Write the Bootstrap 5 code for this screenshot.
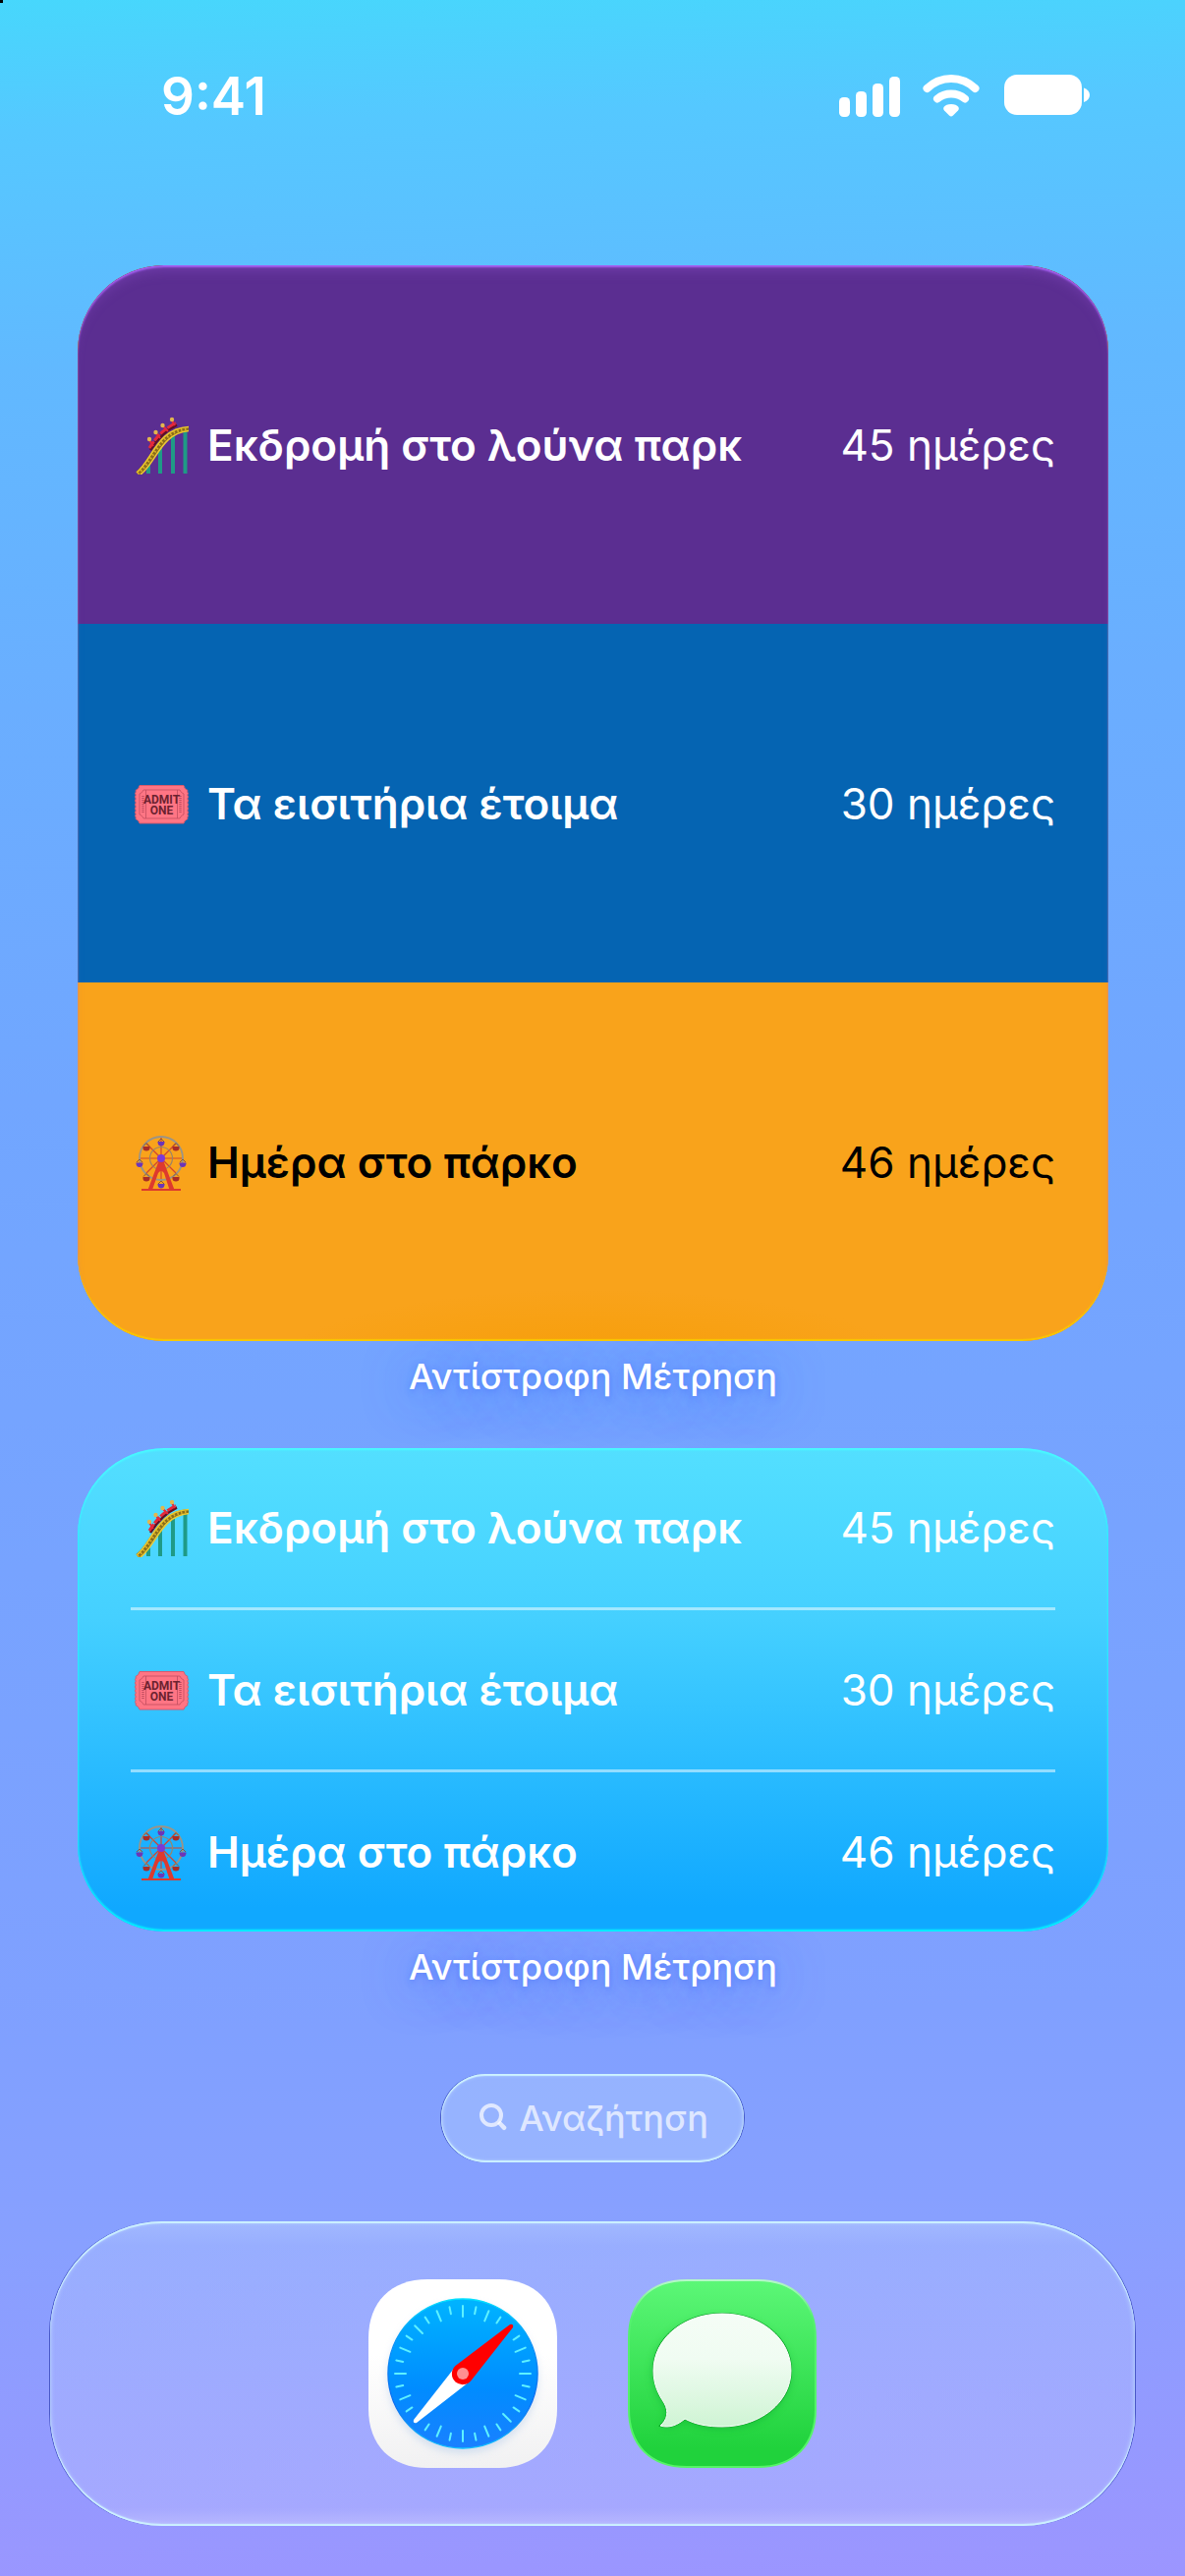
<!DOCTYPE html>
<html lang="el">
  <head>
    <meta charset="UTF-8" />
    <meta name="viewport" content="width=device-width, initial-scale=1.0" />
    <title>Αντίστροφη Μέτρηση</title>
    <link
      href="https://cdn.jsdelivr.net/npm/bootstrap@5.3.0/dist/css/bootstrap.min.css"
      rel="stylesheet"
    />
    <style>
      body {
        min-height: 100vh;
        font-family: "Inter", "Liberation Sans", sans-serif;
        color: #ffffff;
        background: linear-gradient(
          178deg,
          #47d7fc 0%,
          #55c8ff 5%,
          #61b9ff 14%,
          #6aaeff 27%,
          #71a6ff 42%,
          #77a3ff 60%,
          #80a0ff 78%,
          #88a0ff 86%,
          #9c95ff 100%
        );
      }

      body::before {
        content: "";
        position: absolute;
        top: 0;
        left: 0;
        width: 3px;
        height: 3px;
        background: #000000;
      }

      /* Status bar */
      .status-bar {
        height: 196px;
        padding: 0 96px 0 164px;
      }

      .status-time {
        font-size: 53px;
        font-weight: 600;
        line-height: 1;
      }

      /* Widgets */
      .home {
        padding: 74px 78px 0 79px;
      }

      .widget {
        border-radius: 88px;
        overflow: hidden;
      }

      .widget-tall {
        background: #f9a31b;
      }

      .event {
        padding: 0 54px;
        font-size: 44px;
        line-height: 60px;
        gap: 18px;
      }

      .event svg {
        width: 60px;
        height: 60px;
      }

      .event-tall {
        height: 365px;
      }

      .bg-purple {
        background: #5b2e91;
      }

      .bg-ocean {
        background: #0564b2;
      }

      .bg-amber {
        background: radial-gradient(
            ellipse 340px 90px at 50% 110%,
            rgba(245, 155, 0, 0.8),
            rgba(249, 163, 27, 0)
          ),
          #f9a31b;
        color: #000000;
      }

      .rim-tall,
      .rim-wide {
        position: absolute;
        inset: 0;
        border-radius: 88px;
      }

      .rim-tall {
        box-shadow: inset 0 -2px 1px #f8c800, inset 0 2px 2px #a860f5,
          inset 0 12px 14px -8px rgba(150, 90, 220, 0.4);
      }

      .rim-wide {
        box-shadow: inset 0 -2px 2px #00f5ff, inset 0 2px 2px #48fbff,
          inset 0 0 3px #3cf0ff;
      }

      .widget-wide {
        background: linear-gradient(#53dfff, #45d0ff 35%, #10a8ff 95%);
      }

      .event-wide {
        height: 162px;
      }

      .event-line {
        height: 3px;
        margin: 0 54px;
        background: rgba(255, 255, 255, 0.5);
      }

      .caption {
        font-size: 36px;
        font-weight: 500;
        line-height: 48px;
        padding: 12px 0 49px;
        text-shadow: 0 2px 6px rgba(50, 90, 240, 0.35),
          0 6px 50px rgba(50, 110, 255, 0.7);
      }

      /* Search pill and dock */
      .search-area {
        padding-top: 36px;
      }

      .btn-search {
        height: 90px;
        padding: 0 36px;
        gap: 11px;
        border: 0;
        border-radius: 45px;
        font-size: 36px;
        font-weight: 500;
        line-height: 48px;
        color: rgba(255, 255, 255, 0.7);
        background: rgba(165, 195, 255, 0.55);
      }

      .btn-search svg {
        width: 32px;
        height: 32px;
      }

      .glass-rim {
        box-shadow: inset 0 2px 1px #cdf2ff, inset 0 -2px 1px #cdf2ff,
          inset 0 0 4px 1px rgba(190, 215, 255, 0.8),
          1px 0 0 rgba(50, 65, 180, 0.75), -1px 0 0 rgba(50, 65, 180, 0.75);
      }

      .dock {
        height: 310px;
        margin: 60px 51px 51px;
        gap: 72px;
        border-radius: 114px;
        background: linear-gradient(
          rgba(200, 222, 255, 0.4),
          rgba(175, 195, 255, 0.4) 8%,
          rgba(185, 190, 255, 0.42) 94%,
          rgba(215, 215, 255, 0.5)
        );
      }

      .dock svg {
        display: block;
        width: 192px;
        height: 192px;
      }
    </style>
  </head>
  <body>
    <!-- Shared drawings -->
    <svg width="0" height="0" class="position-absolute" aria-hidden="true">
      <defs>
        <symbol id="coaster" viewBox="0 0 60 60">
          <g stroke="#1f9a86" stroke-width="4">
            <path d="M18 46V59M30 32V59M43 21V59M55.500 16V59" />
          </g>
          <path
            d="M7 59C24 46 28 15 59 13.500"
            fill="none"
            stroke="#8a6d18"
            stroke-width="5"
          />
          <path
            d="M6 58C22 45 27 13 59 11.500M10 60C26 48 31 18 59 15.500"
            fill="none"
            stroke="#ecc92f"
            stroke-width="1.600"
          />
          <path
            d="M7 59C24 46 28 15 59 13.500"
            fill="none"
            stroke="#d9b029"
            stroke-width="3"
            stroke-dasharray="1.500 2.500"
          />
          <path d="M20 35C27 24 35 15 47 9.500" fill="none" stroke="#5e1022" stroke-width="2.500" />
          <path
            d="M19 33C26 22 33 14 46 7.500"
            fill="none"
            stroke="#e5283a"
            stroke-width="3"
            stroke-dasharray="8 1.200"
          />
          <g stroke="#e5283a" stroke-width="2">
            <path d="M19 25L23 31M26 18L30 23M33 11L38 16M42 5L45 10" />
          </g>
          <g fill="#e2b64e">
            <circle cx="19" cy="24" r="2.200" />
            <circle cx="25.500" cy="17" r="2.200" />
            <circle cx="32.500" cy="10" r="2.200" />
            <circle cx="42" cy="4" r="2.200" />
          </g>
        </symbol>

        <symbol id="ticket" viewBox="0 0 60 60">
          <path
            d="M9 11.500H54Q54.500 15 58 16.500Q57 18 58.500 19.500Q57 21 58.500 23Q57 25 58.500 27Q57 29 58.500 31Q57 33 58.500 35Q57 37 58.500 39Q57 41 58.500 42.500Q57 44 58 45.500Q54.500 47 54 50H9Q8.500 47 5 45.500Q6 44 4.500 42.500Q6 41 4.500 39Q6 37 4.500 35Q6 33 4.500 31Q6 29 4.500 27Q6 25 4.500 23Q6 21 4.500 19.500Q6 18 5 16.500Q8.500 15 9 11.500Z"
            fill="#ff7584"
            stroke="#d9596c"
          />
          <path
            d="M13 16H50Q51 19 54 20V41Q51 42 50 45H13Q12 42 9 41V20Q12 19 13 16ZM15.500 16V45M47.500 16V45"
            fill="none"
            stroke="#c24e60"
            stroke-width=".8"
          />
          <path
            d="M12.500 22V39M50.500 22V39"
            stroke="#c24e60"
            stroke-width="2.500"
            stroke-dasharray="1 1"
          />
          <g
            fill="#6b2230"
            font-family="'Liberation Sans Narrow', Roboto, sans-serif"
            font-size="12"
            font-weight="700"
            text-anchor="middle"
          >
            <text x="31.500" y="29.500">ADMIT</text>
            <text x="31.500" y="40.500">ONE</text>
          </g>
        </symbol>

        <symbol id="ferris" viewBox="0 0 60 60">
          <path
            d="M31 4V48M9 26H53M15.500 10.500L46.500 41.500M46.500 10.500L15.500 41.500"
            stroke="#d1462f"
            stroke-width="1.200"
          />
          <circle cx="31" cy="26" r="11.500" fill="none" stroke="#9a8468" stroke-width="1.200" />
          <circle cx="31" cy="26" r="22" fill="none" stroke="#9b9487" stroke-width="1.900" />
          <path
            fill="#6b35b8"
            d="M27.500 9H34.500V10Q34 13.500 31 13.500Q28 13.500 27.500 10ZM5.500 30.500H12.500V31.500Q12 35 9 35Q6 35 5.500 31.500ZM49.500 30.500H56.500V31.500Q56 35 53 35Q50 35 49.500 31.500ZM27.500 52H34.500V53Q34 56.500 31 56.500Q28 56.500 27.500 53Z"
          />
          <path
            fill="#a92c26"
            d="M12.500 14H19.500V16Q19 18.500 16 18.500Q13 18.500 12.500 16ZM42.500 14H49.500V16Q49 18.500 46 18.500Q43 18.500 42.500 16ZM12.500 45H19.500V47Q19 49.500 16 49.500Q13 49.500 12.500 47ZM42.500 45H49.500V47Q49 49.500 46 49.500Q43 49.500 42.500 47Z"
          />
          <path
            fill="none"
            stroke="#8a5a3a"
            d="M13 13.500L16 10.500L19 13.500M43 13.500L46 10.500L49 13.500M13 44.500L16 41.500L19 44.500M43 44.500L46 41.500L49 44.500M28 9L31 6L34 9M6 30L9 27L12 30M50 30L53 27L56 30M28 52L31 49L34 52"
          />
          <path
            d="M28.500 29H33.500L44.500 58H39.500L34 41Q31 37 28 41L22 58H17.500Z"
            fill="#dd3a2e"
          />
          <path d="M11 58H51" stroke="#dd3a2e" stroke-width="2.200" />
          <circle cx="31" cy="26" r="4" fill="#7a3ad6" />
        </symbol>
      </defs>
    </svg>

    <header class="status-bar d-flex align-items-center justify-content-between">
      <time class="status-time">9:41</time>
      <svg width="256" height="44" viewBox="0 0 256 44" fill="#fff" role="img" aria-label="Σήμα, Wi-Fi, μπαταρία">
        <rect x="0" y="23" width="11" height="20" rx="4.500" />
        <rect x="17" y="17" width="11" height="26" rx="4.500" />
        <rect x="34" y="9" width="11" height="34" rx="4.500" />
        <rect x="51" y="2" width="11" height="41" rx="4.500" />
        <g fill="none" stroke="#fff" stroke-width="8" stroke-linecap="round">
          <path d="M89.500 14Q100 4 114 4T138.500 14" />
          <path d="M100 24.500Q106 19.500 114 19.500T128 24.500" />
        </g>
        <path d="M114 30C110.500 30 108 31 106.500 33Q105.500 35 107 36.500L112 41.500Q114 43.500 116 41.500L121 36.500Q122.500 35 121.500 33C120 31 117.500 30 114 30Z" />
        <rect x="168" y="0" width="79" height="41" rx="13" />
        <path d="M249 13.500C257 16 257 25.500 249 28Z" />
      </svg>
    </header>

    <main class="home">
      <section class="text-center">
        <div class="widget widget-tall position-relative text-start">
          <ul class="list-unstyled mb-0">
            <li class="event event-tall bg-purple d-flex align-items-center">
              <svg aria-hidden="true"><use href="#coaster" /></svg>
              <span class="fw-semibold me-auto">Εκδρομή στο λούνα παρκ</span>
              <span>45 ημέρες</span>
            </li>
            <li class="event event-tall bg-ocean d-flex align-items-center">
              <svg aria-hidden="true"><use href="#ticket" /></svg>
              <span class="fw-semibold me-auto">Τα εισιτήρια έτοιμα</span>
              <span>30 ημέρες</span>
            </li>
            <li class="event event-tall bg-amber d-flex align-items-center">
              <svg aria-hidden="true"><use href="#ferris" /></svg>
              <span class="fw-semibold me-auto">Ημέρα στο πάρκο</span>
              <span>46 ημέρες</span>
            </li>
          </ul>
          <div class="rim-tall"></div>
        </div>
        <div class="caption">Αντίστροφη Μέτρηση</div>
      </section>

      <section class="text-center">
        <div class="widget widget-wide position-relative text-start">
          <ul class="list-unstyled mb-0">
            <li class="event event-wide d-flex align-items-center">
              <svg aria-hidden="true"><use href="#coaster" /></svg>
              <span class="fw-semibold me-auto">Εκδρομή στο λούνα παρκ</span>
              <span>45 ημέρες</span>
            </li>
            <li class="event-line" role="separator"></li>
            <li class="event event-wide d-flex align-items-center">
              <svg aria-hidden="true"><use href="#ticket" /></svg>
              <span class="fw-semibold me-auto">Τα εισιτήρια έτοιμα</span>
              <span>30 ημέρες</span>
            </li>
            <li class="event-line" role="separator"></li>
            <li class="event event-wide d-flex align-items-center">
              <svg aria-hidden="true"><use href="#ferris" /></svg>
              <span class="fw-semibold me-auto">Ημέρα στο πάρκο</span>
              <span>46 ημέρες</span>
            </li>
          </ul>
          <div class="rim-wide"></div>
        </div>
        <div class="caption">Αντίστροφη Μέτρηση</div>
      </section>
    </main>

    <div class="search-area d-flex justify-content-center">
      <button type="button" class="btn-search glass-rim d-flex align-items-center">
        <svg viewBox="0 0 32 32" fill="none" stroke="currentColor" aria-hidden="true">
          <circle cx="15" cy="13" r="10" stroke-width="4" />
          <path
            d="M21 21.500L24 18.500L30 24.500Q31 26 29.500 27.500Q28 29 26.500 27.500Z"
            fill="currentColor"
            stroke="none"
          />
        </svg>
        Αναζήτηση
      </button>
    </div>

    <nav class="dock glass-rim d-flex align-items-center justify-content-center">
      <a href="#safari" aria-label="Safari">
        <svg viewBox="0 0 192 192">
          <defs>
            <linearGradient id="paper" x2="0" y2="1">
              <stop offset=".4" stop-color="#fff" />
              <stop offset="1" stop-color="#f1f1f2" />
            </linearGradient>
            <linearGradient id="dial" x2="0" y2="1">
              <stop offset="0" stop-color="#00b4ff" />
              <stop offset=".6" stop-color="#008cff" />
              <stop offset="1" stop-color="#1a80ff" />
            </linearGradient>
            <linearGradient id="dialRim" x2="0" y2="1">
              <stop offset="0" stop-color="#00e0ff" />
              <stop offset=".3" stop-color="#0a90f8" />
              <stop offset=".7" stop-color="#0a6cf0" />
              <stop offset="1" stop-color="#10c0ff" />
            </linearGradient>
            <filter id="soft" x="-20%" y="-20%" width="140%" height="140%">
              <feGaussianBlur stdDeviation="4" />
            </filter>
          </defs>
          <path
            d="M60 0H132C169 0 192 23 192 60V132C192 169 169 192 132 192H60C23 192 0 169 0 132V60C0 23 23 0 60 0Z"
            fill="url(#paper)"
          />
          <circle cx="96" cy="101" r="76" fill="#b9cfea" opacity=".6" filter="url(#soft)" />
          <circle cx="96" cy="96" r="76" fill="url(#dial)" stroke="url(#dialRim)" stroke-width="1.500" />
          <g id="ticks" stroke="#5df1ff" stroke-width="2" stroke-linecap="round"></g>
          <path d="M86 92L46 143Q45 147 49 146L103 104Z" fill="#fff" />
          <path d="M88.500 88L144 46Q148 45 147 49L104.500 103A11 11 0 1 1 88.500 88Z" fill="#f00" />
          <circle cx="96" cy="96" r="6" fill="#ff8f90" />
        </svg>
      </a>
      <a href="#messages" aria-label="Messages">
        <svg viewBox="0 0 192 192">
          <defs>
            <linearGradient id="leaf" x2="0" y2="1">
              <stop offset="0" stop-color="#5cf777" />
              <stop offset=".9" stop-color="#20d23c" />
            </linearGradient>
            <linearGradient id="leafRim" x2="0" y2="1">
              <stop offset="0" stop-color="#b5f8c8" />
              <stop offset=".2" stop-color="#55f070" />
              <stop offset="1" stop-color="#55f566" />
            </linearGradient>
            <linearGradient id="cloud" x2="0" y2="1">
              <stop offset="0" stop-color="#f5fdf6" />
              <stop offset=".4" stop-color="#f0fcf2" />
              <stop offset="1" stop-color="#cff4d4" />
            </linearGradient>
          </defs>
          <path
            d="M60 1H132C169 1 191 23 191 60V132C191 169 169 191 132 191H60C23 191 1 169 1 132V60C1 23 23 1 60 1Z"
            fill="url(#leaf)"
            stroke="url(#leafRim)"
            stroke-width="2"
          />
          <path
            d="M95 39C55 39 25 63 25 95C25 110 31 120 37 129C41 137 39 144 34 150C43 151 51 148 58 144C69 149 82 152 95 152C135 152 166 127 166 95C166 63 135 39 95 39Z"
            fill="#0b9c26"
            opacity=".4"
            filter="url(#soft)"
          />
          <path
            d="M96 35C57 35 26 60 26 93C26 107 31 117 37 126C42 135 40 143 33 149C42 152 51 148 58 142C69 148 82 150 96 150C135 150 166 125 166 93C166 60 135 35 96 35Z"
            fill="none"
            stroke="#0fa52a"
            stroke-width="2"
          />
          <path
            d="M96 35C57 35 26 60 26 93C26 107 31 117 37 126C42 135 40 143 33 149C42 152 51 148 58 142C69 148 82 150 96 150C135 150 166 125 166 93C166 60 135 35 96 35Z"
            fill="url(#cloud)"
            stroke="#fff"
            stroke-width="1"
          />
        </svg>
      </a>
    </nav>

    <script src="https://cdn.jsdelivr.net/npm/bootstrap@5.3.0/dist/js/bootstrap.bundle.min.js"></script>
    <script>
      // Compass ticks: long and short ones alternate, none under the needle tips
      const ticks = document.getElementById("ticks");
      for (let i = 0; i < 32; i++) {
        if (i === 4 || i === 20) continue;
        const line = document.createElementNS("http://www.w3.org/2000/svg", "line");
        line.setAttribute("x1", 96);
        line.setAttribute("x2", 96);
        line.setAttribute("y1", 27);
        line.setAttribute("y2", i % 2 ? 34 : 38);
        line.setAttribute("transform", `rotate(${i * 11.25} 96 96)`);
        ticks.appendChild(line);
      }
    </script>
  </body>
</html>
